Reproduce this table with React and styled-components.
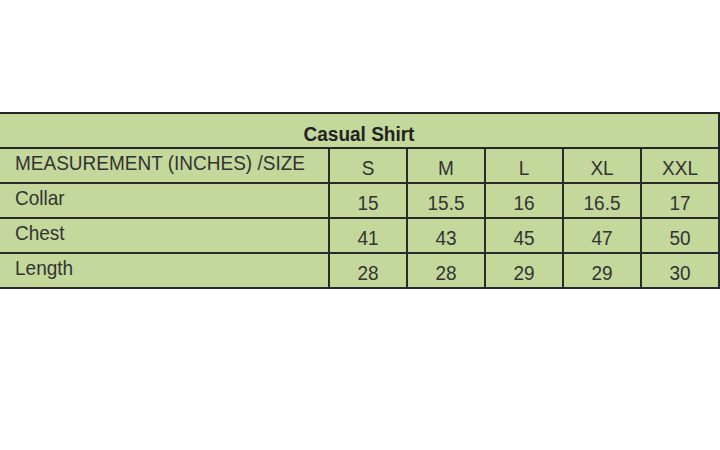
import React from 'react';
import styled, { createGlobalStyle } from 'styled-components';

const sizes = ['S', 'M', 'L', 'XL', 'XXL'];

const rows = [
  { label: 'Collar', values: ['15', '15.5', '16', '16.5', '17'] },
  { label: 'Chest', values: ['41', '43', '45', '47', '50'] },
  { label: 'Length', values: ['28', '28', '29', '29', '30'] },
];

const GlobalStyle = createGlobalStyle`
  html, body {
    margin: 0;
    padding: 0;
    background: #ffffff;
  }
  body {
    width: 720px;
    height: 450px;
    overflow: hidden;
    font-family: "Liberation Sans", Arial, sans-serif;
  }
`;

const Page = styled.div`
  padding-top: 112px;
`;

const Table = styled.table`
  margin-left: -2px;
  width: 721px;
  table-layout: fixed;
  border-collapse: collapse;
  background: #c4d89c;
  border: 2px solid #262626;
  color: #333;
  font-size: 19px;
  line-height: 22px;
`;

const TitleCell = styled.th`
  box-sizing: border-box;
  height: 35px;
  padding: 0 0 1px;
  border: 2px solid #262626;
  vertical-align: bottom;
  text-align: center;
  font-weight: bold;
  font-size: 19px;
  color: #222;
`;

const Cell = styled.td`
  box-sizing: border-box;
  height: 35px;
  padding: 0 0 ${({ $label }) => ($label ? '7px' : '2px')};
  padding-left: ${({ $label }) => ($label ? '15px' : '0')};
  border: 2px solid #2a2a2a;
  vertical-align: bottom;
  text-align: ${({ $label }) => ($label ? 'left' : 'center')};
  white-space: nowrap;
  overflow: hidden;
`;

// the source glyphs are a touch taller than Arial at the same width
const Text = styled.span`
  display: inline-block;
  transform: scaleY(1.1);
  transform-origin: 50% 80%;
`;

const LabelCol = styled.col`
  width: 330px;
`;

const SizeCol = styled.col`
  width: 78px;
`;

export default function App() {
  return (
    <Page>
      <GlobalStyle />
      <Table>
        <colgroup>
          <LabelCol />
          {sizes.map(s => (
            <SizeCol key={`col-${s}`} />
          ))}
        </colgroup>
        <thead>
          <tr>
            <TitleCell colSpan={6}>
              <Text>Casual Shirt</Text>
            </TitleCell>
          </tr>
        </thead>
        <tbody>
          <tr>
            <Cell $label>
              <Text>MEASUREMENT (INCHES) /SIZE</Text>
            </Cell>
            {sizes.map(s => (
              <Cell key={`size-${s}`}>
                <Text>{s}</Text>
              </Cell>
            ))}
          </tr>
          {rows.map(row => (
            <tr key={row.label}>
              <Cell $label>
                <Text>{row.label}</Text>
              </Cell>
              {row.values.map((v, idx) => (
                <Cell key={`${row.label}-${idx}`}>
                  <Text>{v}</Text>
                </Cell>
              ))}
            </tr>
          ))}
        </tbody>
      </Table>
    </Page>
  );
}
